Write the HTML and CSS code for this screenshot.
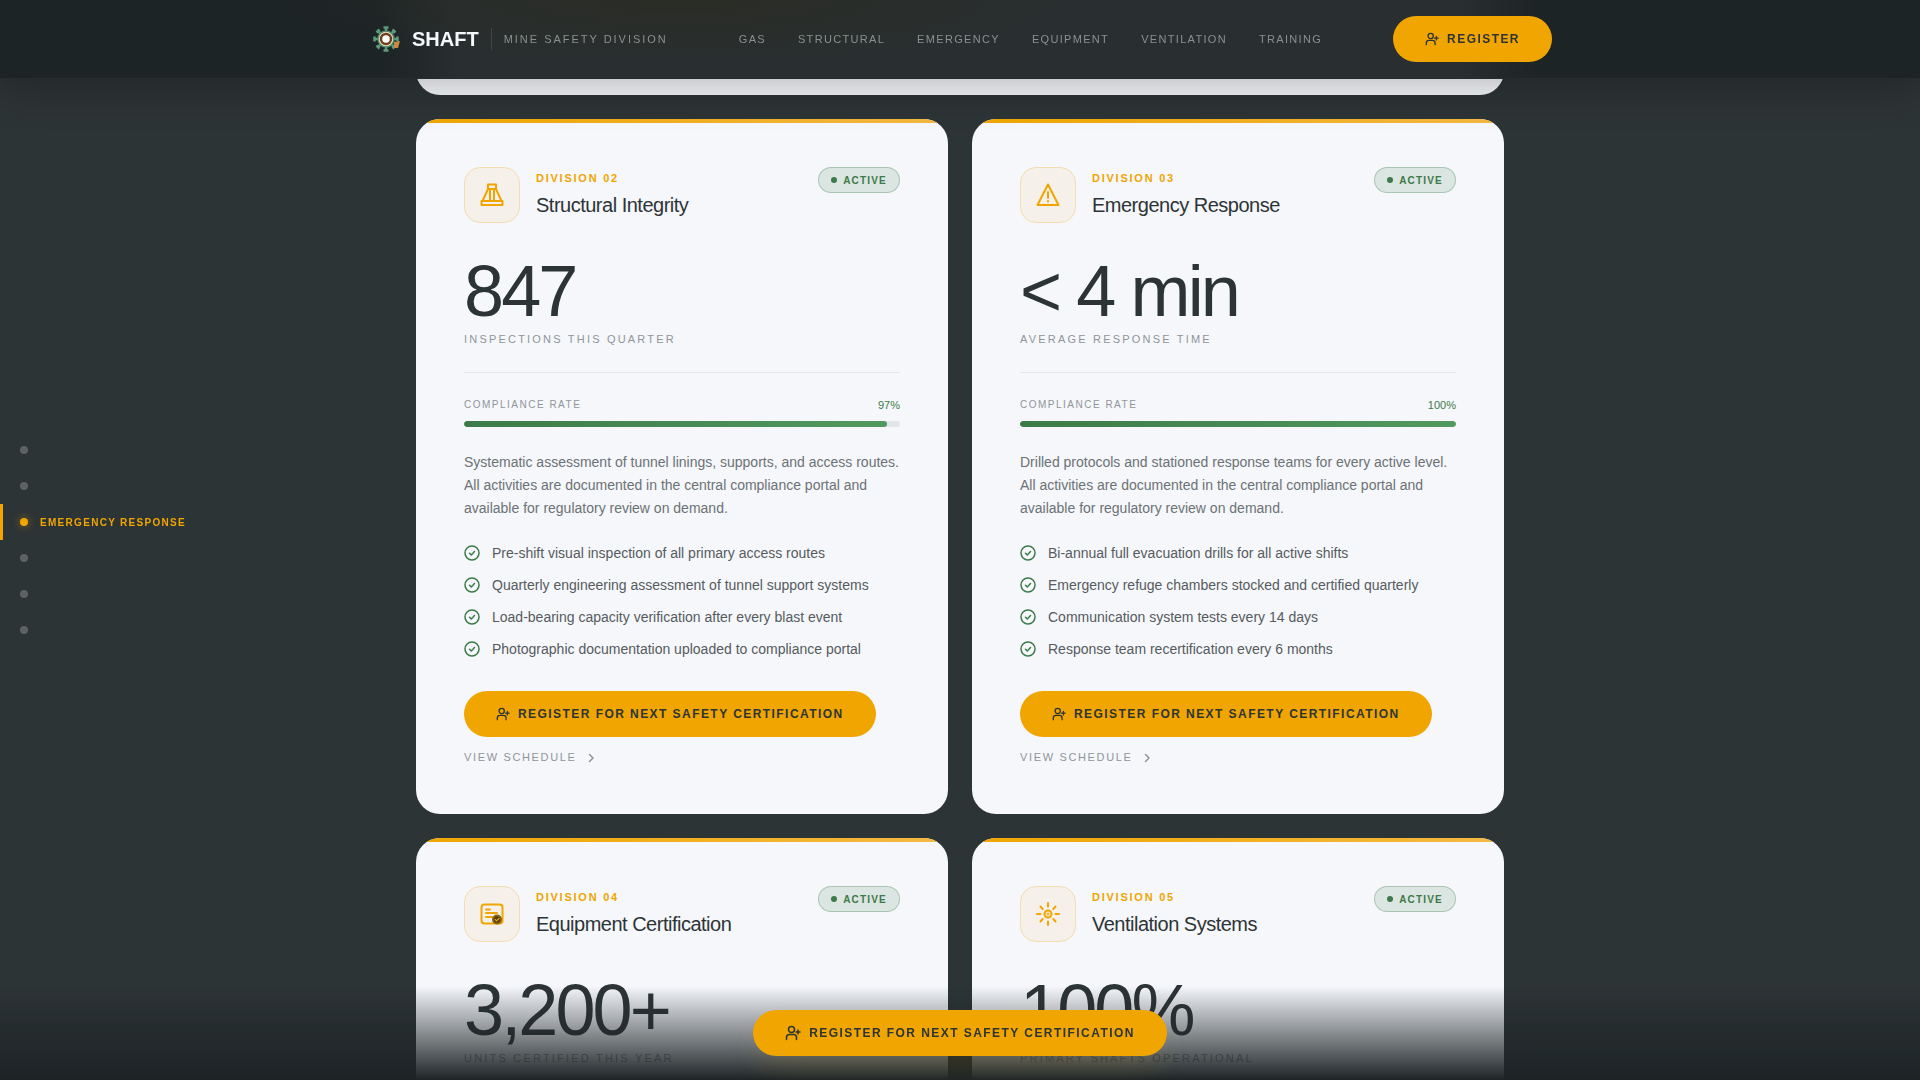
FILE: index.html
```html
<!DOCTYPE html>
<html lang="en">
<head>
  <title>SHAFT - Mine Safety Division</title>
  <meta charset="utf-8" />
  <meta name="viewport" content="width=device-width, initial-scale=1.0">
  <link rel="stylesheet" href="styles.css">
</head>
<body>

  <!-- Shared icons -->
  <svg class="sprite" aria-hidden="true">
    <symbol id="user-plus" viewBox="0 0 16 16">
      <g fill="none" stroke="currentColor" stroke-width="1.5" stroke-linecap="round" stroke-linejoin="round">
        <circle cx="6.5" cy="4.5" r="3" />
        <path d="M1.5 14.5v-2a3 3 0 0 1 3-3h4a3 3 0 0 1 3 3v2M11 7h4M13 5v4" />
      </g>
    </symbol>
    <symbol id="check" viewBox="0 0 16 16">
      <g fill="none" stroke="currentColor" stroke-width="1.5" stroke-linecap="round" stroke-linejoin="round">
        <circle cx="8" cy="8" r="7" />
        <path d="M5.5 8.2l1.8 1.8 3.2-3.4" />
      </g>
    </symbol>
    <symbol id="chevron" viewBox="0 0 12 12">
      <path d="M4.5 2.5L8 6l-3.5 3.5" fill="none" stroke="currentColor" stroke-width="1.5" stroke-linecap="round" stroke-linejoin="round" />
    </symbol>
  </svg>

  <header class="site-header">
    <div class="header-inner">
      <a class="brand" href="#">
        <svg class="brand-logo" viewBox="0 0 36 36" aria-hidden="true">
          <g fill="none" stroke="#5d9a7c" stroke-width="2.5">
            <path d="M18 6v6M18 24v6M6 18h6M24 18h6M10 10l4 4M26 10l-4 4M10 26l4-4M26 26l-4-4" />
            <path d="M15.5 6.5h5M15.5 29.5h5M6.5 15.5v5M29.5 15.5v5M8.5 11.5l3-3M24.5 8.5l3 3M8.5 24.5l3 3M24.5 27.5l3-3" />
          </g>
          <circle cx="18" cy="18" r="8" fill="#e8e0c8" stroke="#4d8a6a" stroke-width="1.5" />
          <circle cx="18" cy="18" r="5" fill="#fff" stroke="#70401f" stroke-width="2.5" />
          <path d="M26 21l6-1-2 7h-4z" fill="#c9893f" />
        </svg>
        <span class="brand-name">SHAFT</span>
        <span class="brand-sub">Mine Safety Division</span>
      </a>
      <nav class="main-nav">
        <a href="#gas">Gas</a>
        <a href="#structural">Structural</a>
        <a href="#emergency">Emergency</a>
        <a href="#equipment">Equipment</a>
        <a href="#ventilation">Ventilation</a>
        <a href="#training">Training</a>
      </nav>
      <button class="btn" type="button"><svg><use href="#user-plus" /></svg>Register</button>
    </div>
  </header>

  <nav class="side-nav" aria-label="Divisions">
    <a href="#gas" aria-label="Gas"><i></i></a>
    <a href="#structural" aria-label="Structural"><i></i></a>
    <a href="#emergency" class="active"><i></i>Emergency Response</a>
    <a href="#equipment" aria-label="Equipment"><i></i></a>
    <a href="#ventilation" aria-label="Ventilation"><i></i></a>
    <a href="#training" aria-label="Training"><i></i></a>
  </nav>

  <main class="divisions">
    <section class="card card-wide" id="gas"></section>

    <section class="card" id="structural">
      <div class="card-head">
        <div class="card-icon">
          <svg viewBox="0 0 24 24" aria-hidden="true">
            <path d="M8 1.5h8V6H8zM8 6L2.5 18M16 6l5.5 12M10 6v12M14 6v12M1.5 18h21v4h-21z" />
          </svg>
        </div>
        <div class="card-title">
          <p>Division 02</p>
          <h2>Structural Integrity</h2>
        </div>
        <span class="badge">Active</span>
      </div>
      <p class="stat">847</p>
      <p class="stat-label">Inspections this quarter</p>
      <div class="rate">
        <span>Compliance rate</span>
        <span class="rate-value">97%</span>
      </div>
      <div class="bar"><div class="bar-fill" style="width: 97%"></div></div>
      <p class="desc">Systematic assessment of tunnel linings, supports, and access routes. All activities are documented in the central compliance portal and available for regulatory review on demand.</p>
      <ul class="checks">
        <li><svg><use href="#check" /></svg>Pre-shift visual inspection of all primary access routes</li>
        <li><svg><use href="#check" /></svg>Quarterly engineering assessment of tunnel support systems</li>
        <li><svg><use href="#check" /></svg>Load-bearing capacity verification after every blast event</li>
        <li><svg><use href="#check" /></svg>Photographic documentation uploaded to compliance portal</li>
      </ul>
      <button class="btn" type="button"><svg><use href="#user-plus" /></svg>Register for next safety certification</button>
      <a class="schedule" href="#">View schedule<svg><use href="#chevron" /></svg></a>
    </section>

    <section class="card" id="emergency">
      <div class="card-head">
        <div class="card-icon">
          <svg viewBox="0 0 24 24" aria-hidden="true">
            <path d="M12 1.5L22.5 22h-21zM12 9v6M12 18v0.5" />
          </svg>
        </div>
        <div class="card-title">
          <p>Division 03</p>
          <h2>Emergency Response</h2>
        </div>
        <span class="badge">Active</span>
      </div>
      <p class="stat">&lt; 4 min</p>
      <p class="stat-label">Average response time</p>
      <div class="rate">
        <span>Compliance rate</span>
        <span class="rate-value">100%</span>
      </div>
      <div class="bar"><div class="bar-fill" style="width: 100%"></div></div>
      <p class="desc">Drilled protocols and stationed response teams for every active level. All activities are documented in the central compliance portal and available for regulatory review on demand.</p>
      <ul class="checks">
        <li><svg><use href="#check" /></svg>Bi-annual full evacuation drills for all active shifts</li>
        <li><svg><use href="#check" /></svg>Emergency refuge chambers stocked and certified quarterly</li>
        <li><svg><use href="#check" /></svg>Communication system tests every 14 days</li>
        <li><svg><use href="#check" /></svg>Response team recertification every 6 months</li>
      </ul>
      <button class="btn" type="button"><svg><use href="#user-plus" /></svg>Register for next safety certification</button>
      <a class="schedule" href="#">View schedule<svg><use href="#chevron" /></svg></a>
    </section>

    <section class="card" id="equipment">
      <div class="card-head">
        <div class="card-icon">
          <svg viewBox="0 0 24 24" aria-hidden="true">
            <rect x="1.5" y="2.5" width="21" height="19" rx="3" />
            <path d="M6 7.5h4M6 11h11M6 15h6" />
            <circle cx="17" cy="17.5" r="4" fill="#4a3a12" stroke="#8a6410" />
            <path d="M15.3 17.5l1.3 1.3 2.3-2.3" stroke-width="1.2" />
          </svg>
        </div>
        <div class="card-title">
          <p>Division 04</p>
          <h2>Equipment Certification</h2>
        </div>
        <span class="badge">Active</span>
      </div>
      <p class="stat">3,200+</p>
      <p class="stat-label">Units certified this year</p>
    </section>

    <section class="card" id="ventilation">
      <div class="card-head">
        <div class="card-icon">
          <svg viewBox="0 0 24 24" aria-hidden="true">
            <circle cx="12" cy="12" r="3.5" />
            <circle cx="12" cy="12" r="0.5" />
            <path d="M12 1v3.5M12 19.5V23M1 12h3.5M19.5 12H23M4.5 4.5L6.7 7M19.5 4.5L17.3 7M4.5 19.5L6.7 17M19.5 19.5L17.3 17" />
          </svg>
        </div>
        <div class="card-title">
          <p>Division 05</p>
          <h2>Ventilation Systems</h2>
        </div>
        <span class="badge">Active</span>
      </div>
      <p class="stat">100%</p>
      <p class="stat-label">Primary shafts operational</p>
    </section>
  </main>

  <div class="bottom-bar">
    <button class="btn btn-large" type="button"><svg><use href="#user-plus" /></svg>Register for next safety certification</button>
  </div>

</body>
</html>
```
FILE: styles.css
```css
* {
  box-sizing: border-box;
  margin: 0;
  padding: 0;
}

body {
  height: 100vh;
  overflow: hidden;
  background: #2d3436;
  color: #2d3436;
  font-family: "Liberation Sans", Arial, sans-serif;
  font-size: 14px;
}

a {
  text-decoration: none;
}

.sprite {
  position: absolute;
  width: 0;
  height: 0;
}

/* Header */

.site-header {
  position: fixed;
  top: 0;
  left: 0;
  right: 0;
  z-index: 10;
  background:
    radial-gradient(400px 64px at calc(50% - 280px) 0, rgba(42, 44, 36, 0.9), rgba(42, 44, 36, 0)),
    linear-gradient(90deg, #1d2426 calc(50% - 580px), #292e30 calc(50% - 500px), #292e30 calc(50% + 500px), #1d2426 calc(50% + 580px));
  border-bottom: 1px solid #262d2f;
  box-shadow: 0 8px 40px rgba(0, 0, 0, 0.25);
}

.header-inner {
  display: flex;
  align-items: center;
  justify-content: space-between;
  max-width: 1280px;
  margin: 0 auto;
  padding: 16px 48px;
}

.brand {
  display: flex;
  align-items: center;
}

.brand-logo {
  width: 36px;
  height: 36px;
  margin-right: 8px;
}

.brand-name {
  color: #f5f7fa;
  font-size: 20px;
  font-weight: bold;
}

.brand-sub {
  margin-left: 12px;
  padding: 5px 0 5px 12px;
  border-left: 1px solid rgba(255, 255, 255, 0.12);
  color: #8a9091;
  font-size: 11px;
  letter-spacing: 0.18em;
  text-transform: uppercase;
}

.main-nav {
  display: flex;
  gap: 32px;
}

.main-nav a {
  color: #8a9091;
  font-size: 11px;
  letter-spacing: 0.12em;
  text-transform: uppercase;
}

.btn {
  display: inline-flex;
  align-items: center;
  gap: 8px;
  height: 46px;
  padding: 0 32px;
  border: 0;
  border-radius: 24px;
  background: #f0a500;
  color: #2d3436;
  font-family: inherit;
  font-size: 12px;
  font-weight: bold;
  letter-spacing: 0.12em;
  text-transform: uppercase;
  white-space: nowrap;
}

.btn svg {
  width: 14px;
  height: 14px;
}

.btn-large svg {
  width: 16px;
  height: 16px;
}

/* Side navigation */

.side-nav {
  position: fixed;
  top: 50%;
  left: 0;
  transform: translateY(-50%);
}

.side-nav a {
  display: flex;
  align-items: center;
  gap: 12px;
  height: 36px;
  padding-left: 17px;
  border-left: 3px solid transparent;
  color: #f0a500;
  font-size: 10px;
  font-weight: bold;
  letter-spacing: 0.13em;
  text-transform: uppercase;
}

.side-nav i {
  width: 8px;
  height: 8px;
  border-radius: 50%;
  background: #5c6264;
}

.side-nav .active {
  border-color: #f0a500;
}

.side-nav .active i {
  background: #f0a500;
  box-shadow: 0 0 8px rgba(240, 165, 0, 0.5);
}

/* Cards */

.divisions {
  display: grid;
  grid-template-columns: 1fr 1fr;
  gap: 24px;
  max-width: 1184px;
  margin: 0 auto;
  padding: 0 48px;
}

.card {
  position: relative;
  overflow: hidden;
  padding: 48px;
  border-radius: 24px;
  background: #f5f7fb;
}

.card::before {
  content: "";
  position: absolute;
  top: 0;
  left: 0;
  right: 0;
  height: 4px;
  background: linear-gradient(90deg, #f0a500, #f5b942);
}

.card-wide {
  grid-column: 1 / -1;
  height: 95px;
  padding: 0;
  border-radius: 0 0 24px 24px;
}

.card-head {
  display: flex;
  gap: 16px;
}

.card-icon {
  display: flex;
  align-items: center;
  justify-content: center;
  width: 56px;
  height: 56px;
  border: 1px solid #f3ddb0;
  border-radius: 16px;
  background: #f6f0ea;
}

.card-icon svg {
  width: 24px;
  height: 24px;
  fill: none;
  stroke: #f0a500;
  stroke-width: 2;
  stroke-linecap: round;
  stroke-linejoin: round;
}

.card-title {
  flex: 1;
  padding-top: 5px;
}

.card-title p {
  margin-bottom: 8px;
  color: #f0a500;
  font-size: 11px;
  font-weight: bold;
  letter-spacing: 0.16em;
  line-height: 13px;
  text-transform: uppercase;
}

.card-title h2 {
  font-size: 20px;
  font-weight: normal;
  letter-spacing: -0.025em;
  line-height: 24px;
}

.badge {
  display: flex;
  align-items: center;
  align-self: flex-start;
  gap: 6px;
  height: 26px;
  padding: 0 12px;
  border: 1px solid rgba(61, 122, 74, 0.3);
  border-radius: 13px;
  background: rgba(61, 122, 74, 0.14);
  color: #3d7a4a;
  font-size: 10px;
  font-weight: bold;
  letter-spacing: 0.12em;
  text-transform: uppercase;
}

.badge::before {
  content: "";
  width: 6px;
  height: 6px;
  border-radius: 50%;
  background: #3d7a4a;
}

.stat {
  margin-top: 32px;
  font-size: 72px;
  letter-spacing: -0.04em;
  line-height: 1;
}

.stat-label {
  margin-top: 6px;
  padding-bottom: 26px;
  border-bottom: 1px solid #e4e7ea;
  color: #90959a;
  font-size: 11px;
  letter-spacing: 0.2em;
  line-height: 13px;
  text-transform: uppercase;
}

.rate {
  display: flex;
  justify-content: space-between;
  margin-top: 25px;
  color: #90959a;
  font-size: 10px;
  letter-spacing: 0.15em;
  line-height: 14px;
  text-transform: uppercase;
}

.rate-value {
  color: #3d7a4a;
  font-size: 11px;
  letter-spacing: 0;
}

.bar {
  height: 6px;
  margin-top: 9px;
  overflow: hidden;
  border-radius: 3px;
  background: #e2e5e7;
}

.bar-fill {
  height: 100%;
  border-radius: 3px;
  background: linear-gradient(90deg, #3d7a4a, #52995f);
}

.desc {
  margin-top: 24px;
  color: #6c7275;
  line-height: 23px;
}

.checks {
  display: grid;
  gap: 12px;
  margin: 23px 0 32px;
  list-style: none;
}

.checks li {
  display: flex;
  align-items: center;
  gap: 12px;
  color: #555b5e;
  line-height: 20px;
}

.checks svg {
  width: 16px;
  height: 16px;
  color: #3d7a4a;
}

.schedule {
  display: flex;
  align-items: center;
  gap: 8px;
  margin-top: 12px;
  color: #90959a;
  font-size: 11px;
  letter-spacing: 0.15em;
  line-height: 17px;
  text-transform: uppercase;
}

.schedule svg {
  width: 12px;
  height: 12px;
}

/* Sticky call to action */

.bottom-bar {
  position: fixed;
  bottom: 0;
  left: 0;
  right: 0;
  z-index: 10;
  display: flex;
  justify-content: center;
  padding: 24px;
  background: linear-gradient(to top, #1d2426, rgba(29, 36, 38, 0));
}

.bottom-bar .btn {
  box-shadow: 0 16px 32px -8px rgba(240, 165, 0, 0.15);
}
```
